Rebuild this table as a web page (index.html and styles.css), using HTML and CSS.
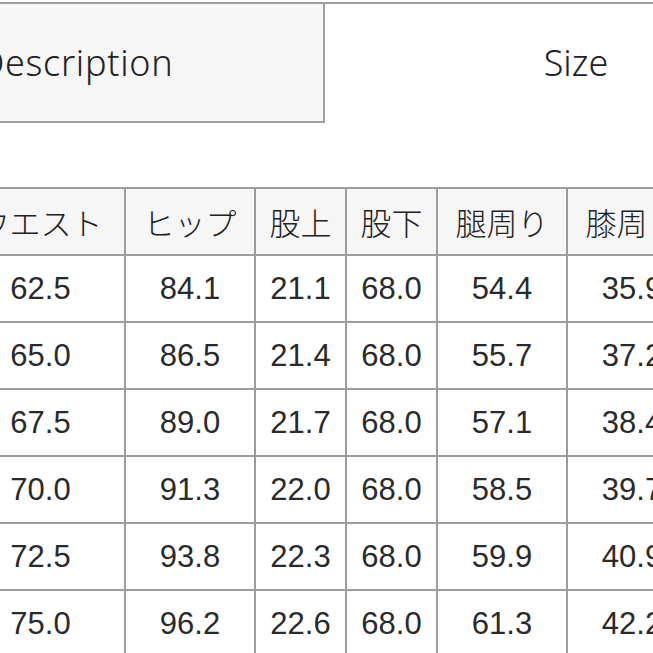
FILE: index.html
```html
<!DOCTYPE html>
<html lang="ja">
<head>
<meta charset="utf-8">
<link rel="stylesheet" href="styles.css">
</head>
<body>
<div class="page">
  <div class="tabs">
    <div class="tab tab-inactive">Description</div>
    <div class="tab tab-active">Size</div>
  </div>
  <table class="size-table">
    <colgroup>
      <col class="c-wide-first">
      <col class="c-wide">
      <col class="c-narrow">
      <col class="c-narrow">
      <col class="c-wide">
      <col class="c-wide">
      <col class="c-wide">
    </colgroup>
    <thead>
      <tr><th>ウエスト</th><th>ヒップ</th><th>股上</th><th>股下</th><th>腿周り</th><th>膝周り</th><th>裾周り</th></tr>
    </thead>
    <tbody>
      <tr><td>62.5</td><td>84.1</td><td>21.1</td><td>68.0</td><td>54.4</td><td>35.9</td><td>30.0</td></tr>
      <tr><td>65.0</td><td>86.5</td><td>21.4</td><td>68.0</td><td>55.7</td><td>37.2</td><td>31.0</td></tr>
      <tr><td>67.5</td><td>89.0</td><td>21.7</td><td>68.0</td><td>57.1</td><td>38.4</td><td>32.0</td></tr>
      <tr><td>70.0</td><td>91.3</td><td>22.0</td><td>68.0</td><td>58.5</td><td>39.7</td><td>33.0</td></tr>
      <tr><td>72.5</td><td>93.8</td><td>22.3</td><td>68.0</td><td>59.9</td><td>40.9</td><td>34.0</td></tr>
      <tr><td>75.0</td><td>96.2</td><td>22.6</td><td>68.0</td><td>61.3</td><td>42.2</td><td>35.0</td></tr>
    </tbody>
  </table>
</div>
</body>
</html>
```

FILE: styles.css
```css
html, body {
  margin: 0;
  padding: 0;
  background: #ffffff;
  overflow: hidden;
}
body {
  width: 653px;
  height: 653px;
  font-family: "Noto Sans", "Noto Sans CJK JP", sans-serif;
  color: #222222;
}
.page {
  padding-top: 2px;
}
.tabs {
  display: flex;
  margin-left: -177px;
  width: 1004px;
  border-top: 2px solid #a0a0a0;
}
.tab {
  width: 502px;
  height: 117px;
  box-sizing: border-box;
  display: flex;
  align-items: center;
  justify-content: center;
  font-size: 36px;
  font-weight: 300;
}
.tab-inactive {
  background: #f6f6f6;
  border-right: 2px solid #a0a0a0;
  border-bottom: 2px solid #a0a0a0;
  height: 119px;
  letter-spacing: 0.7px;
  padding-left: 6px;
}
.tab-active {
  background: #ffffff;
}
.size-table {
  margin-top: 64px;
  margin-left: -45px;
  border-collapse: collapse;
  table-layout: fixed;
  width: 870px;
}
.c-wide-first { width: 169px; }
.c-wide { width: 130px; }
.c-narrow { width: 91px; }
.size-table th,
.size-table td {
  border: 2px solid #9c9c9c;
  height: 65px;
  padding: 0;
  text-align: center;
  white-space: nowrap;
  overflow: hidden;
}
.size-table th {
  background: #f6f6f6;
  font-family: "Noto Sans CJK JP", sans-serif;
  font-size: 31px;
  font-weight: 300;
}
.size-table td {
  background: #ffffff;
  font-family: "Liberation Sans", Arial, sans-serif;
  font-size: 31px;
  font-weight: 400;
  color: #2a2a2a;
}
```
